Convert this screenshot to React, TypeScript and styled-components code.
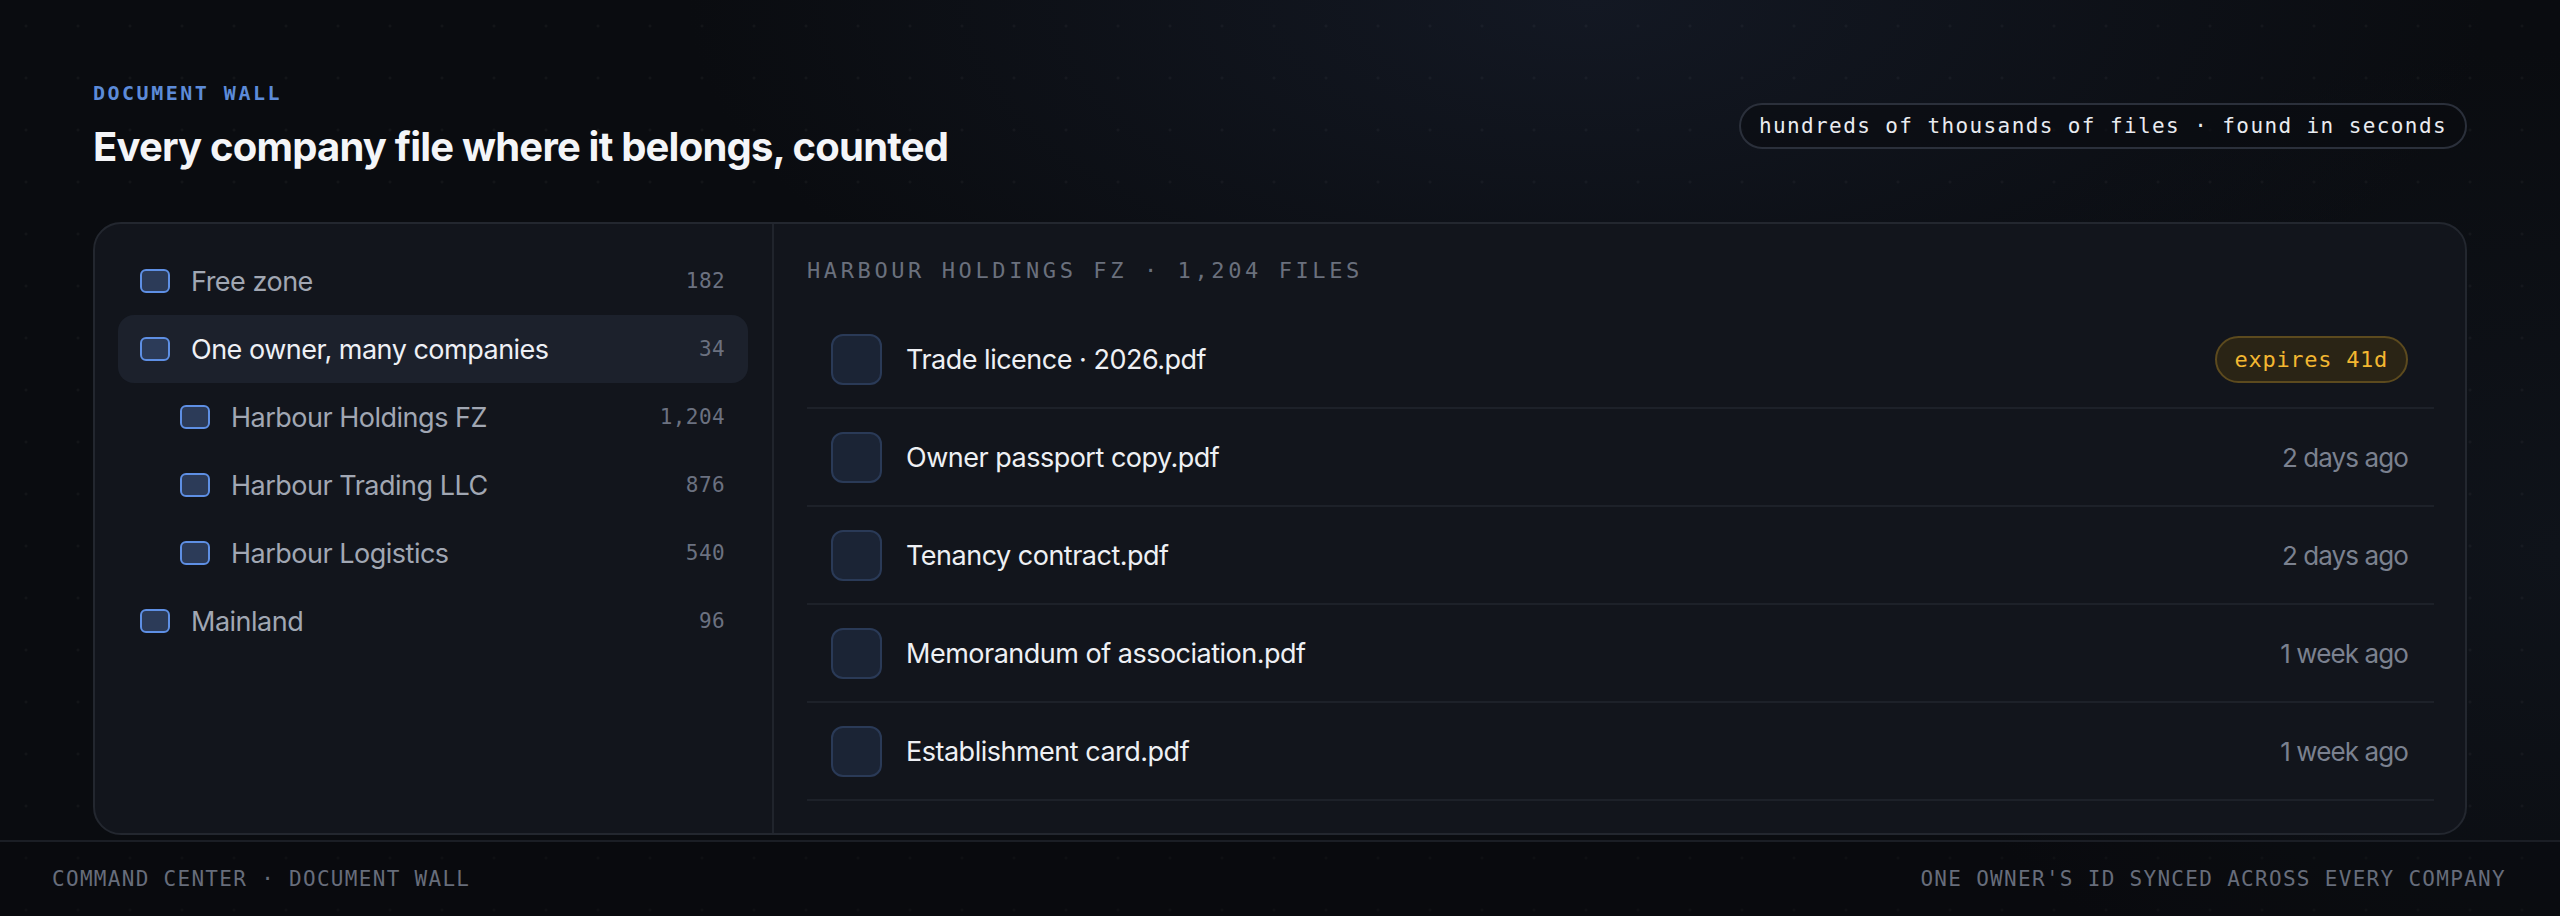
import React from "react";
import styled, { createGlobalStyle } from "styled-components";

const SANS = `Inter, "Noto Sans", "Liberation Sans", sans-serif`;
const MONO = `"DejaVu Sans Mono", "Liberation Mono", monospace`;

const GlobalStyle = createGlobalStyle`
  * { box-sizing: border-box; }
  html, body {
    margin: 0;
    padding: 0;
    background: #0a0c10;
  }
  body {
    font-family: ${SANS};
    color: #eef0f4;
  }
`;

interface Folder {
  name: string;
  count: string;
  level: number;
  active?: boolean;
}

interface DocFile {
  name: string;
  meta: string;
  expires?: boolean;
}

const folders: Folder[] = [
  { name: "Free zone", count: "182", level: 0 },
  { name: "One owner, many companies", count: "34", level: 0, active: true },
  { name: "Harbour Holdings FZ", count: "1,204", level: 1 },
  { name: "Harbour Trading LLC", count: "876", level: 1 },
  { name: "Harbour Logistics", count: "540", level: 1 },
  { name: "Mainland", count: "96", level: 0 },
];

const files: DocFile[] = [
  { name: "Trade licence · 2026.pdf", meta: "expires 41d", expires: true },
  { name: "Owner passport copy.pdf", meta: "2 days ago" },
  { name: "Tenancy contract.pdf", meta: "2 days ago" },
  { name: "Memorandum of association.pdf", meta: "1 week ago" },
  { name: "Establishment card.pdf", meta: "1 week ago" },
];

const Page = styled.div`
  width: 2560px;
  height: 916px;
  display: flex;
  flex-direction: column;
  overflow: hidden;
  background:
    radial-gradient(circle, rgba(255, 255, 255, 0.035) 1.2px, transparent 1.8px) 0 0 / 52px 52px,
    radial-gradient(ellipse 900px 420px at 62% 0%, #131823 0%, rgba(19, 24, 35, 0) 100%),
    radial-gradient(ellipse 700px 500px at 100% 60%, #0f131a 0%, rgba(15, 19, 26, 0) 100%),
    #0a0c10;
`;

const Main = styled.main`
  flex: 1;
  padding: 80px 93px 5px;
  display: flex;
  flex-direction: column;
`;

const Header = styled.header`
  display: flex;
  align-items: center;
  justify-content: space-between;
  margin-bottom: 51px;
`;

const TitleBlock = styled.div`
  display: flex;
  flex-direction: column;
  gap: 17px;
`;

const Eyebrow = styled.div`
  font-family: ${MONO};
  font-size: 20px;
  line-height: 26px;
  font-weight: 700;
  letter-spacing: 2.5px;
  color: #5c8bd8;
`;

const Title = styled.h1`
  margin: 0;
  font-family: ${SANS};
  font-size: 40px;
  line-height: 48px;
  font-weight: 700;
  letter-spacing: -0.8px;
  color: #f4f5f8;
`;

const Pill = styled.div`
  height: 46px;
  display: flex;
  align-items: center;
  padding: 0 18px;
  border: 2px solid #2b303b;
  border-radius: 23px;
  background: rgba(10, 12, 16, 0.6);
  font-family: ${MONO};
  font-size: 21px;
  letter-spacing: 1.4px;
  color: #e9ebf0;
`;

const Panel = styled.section`
  height: 613px;
  display: grid;
  grid-template-columns: 679px 1fr;
  border: 2px solid #23272f;
  border-radius: 28px;
  background: #12151c;
  overflow: hidden;
`;

const FolderColumn = styled.nav`
  border-right: 2px solid #20242c;
  padding: 23px 24px 0 23px;
  display: flex;
  flex-direction: column;
`;

const FolderRow = styled.div<{ $level: number; $active?: boolean }>`
  height: 68px;
  display: flex;
  align-items: center;
  padding: 0 23px 0 ${(p) => 22 + p.$level * 40}px;
  border-radius: 16px;
  background: ${(p) => (p.$active ? "#1c212c" : "transparent")};
`;

const Checkbox = styled.span`
  width: 30px;
  height: 24px;
  flex: none;
  margin-right: 21px;
  border: 2px solid #5e8fe4;
  border-radius: 6px;
  background: #2c3b58;
`;

const FolderName = styled.span<{ $active?: boolean }>`
  flex: 1;
  font-size: 27px;
  letter-spacing: -0.5px;
  color: ${(p) => (p.$active ? "#eef0f5" : "#a1a7b3")};
`;

const Count = styled.span`
  font-family: ${MONO};
  font-size: 21px;
  letter-spacing: 0.4px;
  color: #6b7180;
`;

const FileColumn = styled.div`
  padding: 34px 31px 0 33px;
  display: flex;
  flex-direction: column;
`;

const FileHeading = styled.div`
  font-family: ${MONO};
  font-size: 22px;
  line-height: 26px;
  letter-spacing: 3.6px;
  color: #6a707d;
  margin-bottom: 27px;
`;

const FileRow = styled.div`
  height: 98px;
  display: flex;
  align-items: center;
  padding: 0 26px 0 24px;
  border-bottom: 2px solid #1d2129;
`;

const FileIcon = styled.span`
  width: 51px;
  height: 51px;
  flex: none;
  margin-right: 24px;
  border: 2px solid #2a3a57;
  border-radius: 12px;
  background: #1b2435;
`;

const FileName = styled.span`
  flex: 1;
  font-size: 27px;
  letter-spacing: -0.5px;
  color: #eef0f4;
`;

const Meta = styled.span`
  font-size: 26px;
  letter-spacing: -0.9px;
  color: #7b818f;
`;

const ExpiryBadge = styled.span`
  height: 47px;
  display: flex;
  align-items: center;
  padding: 0 18px;
  border: 2px solid #5c4a1e;
  border-radius: 24px;
  background: #2a2415;
  font-family: ${MONO};
  font-size: 22px;
  letter-spacing: 0.7px;
  color: #f3b731;
`;

const Footer = styled.footer`
  height: 76px;
  flex: none;
  display: flex;
  align-items: center;
  justify-content: space-between;
  padding: 0 54px 0 52px;
  border-top: 2px solid #1b1e25;
  background: rgba(8, 9, 12, 0.35);
  font-family: ${MONO};
  font-size: 21px;
  letter-spacing: 1.3px;
  color: #676d7b;
`;

const App = () => {
  return (
    <>
      <GlobalStyle />
      <Page>
        <Main>
          <Header>
            <TitleBlock>
              <Eyebrow>DOCUMENT WALL</Eyebrow>
              <Title>Every company file where it belongs, counted</Title>
            </TitleBlock>
            <Pill>hundreds of thousands of files · found in seconds</Pill>
          </Header>
          <Panel>
            <FolderColumn>
              {folders.map((f) => (
                <FolderRow key={f.name} $level={f.level} $active={f.active}>
                  <Checkbox />
                  <FolderName $active={f.active}>{f.name}</FolderName>
                  <Count>{f.count}</Count>
                </FolderRow>
              ))}
            </FolderColumn>
            <FileColumn>
              <FileHeading>HARBOUR HOLDINGS FZ · 1,204 FILES</FileHeading>
              {files.map((f) => (
                <FileRow key={f.name}>
                  <FileIcon />
                  <FileName>{f.name}</FileName>
                  {f.expires ? <ExpiryBadge>{f.meta}</ExpiryBadge> : <Meta>{f.meta}</Meta>}
                </FileRow>
              ))}
            </FileColumn>
          </Panel>
        </Main>
        <Footer>
          <span>COMMAND CENTER · DOCUMENT WALL</span>
          <span>ONE OWNER'S ID SYNCED ACROSS EVERY COMPANY</span>
        </Footer>
      </Page>
    </>
  );
};

export default App;
